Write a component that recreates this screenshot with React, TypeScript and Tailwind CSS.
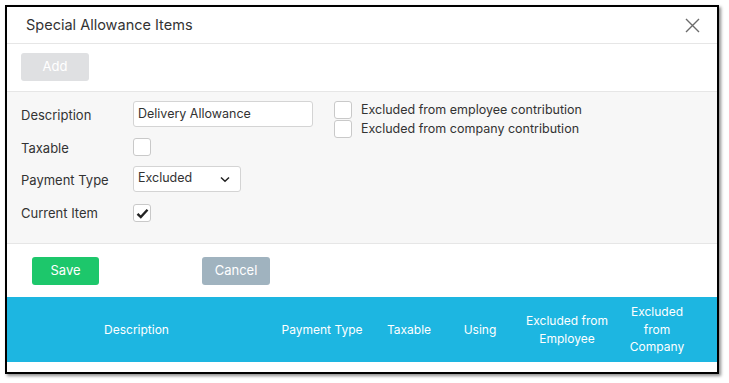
import { useState } from "react";

const columns = [
  { label: "Description", w: "w-[259px]", px: "px-[8px]" },
  { label: "Payment Type", w: "w-[112px]", px: "px-[8px]" },
  { label: "Taxable", w: "w-[62px]", px: "px-[8px]" },
  { label: "Using", w: "w-[80px]", px: "px-[8px]" },
  { label: "Excluded from Employee", w: "w-[94px]", px: "px-[3px]" },
  { label: "Excluded from Company", w: "w-[86px]", px: "px-[8px]" },
];

function Check({ checked, className = "" }: { checked?: boolean; className?: string }) {
  return (
    <div className={"w-[18px] h-[18px] bg-white border border-[#c9c9c9] rounded-[3px] flex items-center justify-center " + className}>
      {checked && (
        <svg width="13" height="11" viewBox="0 0 13 11">
          <path d="M1.5 5.8 L4.8 9 L11.5 1.8" fill="none" stroke="#222" strokeWidth="2.4" />
        </svg>
      )}
    </div>
  );
}

export default function App() {
  const [desc, setDesc] = useState("Delivery Allowance");

  return (
    <div className="w-[729px] h-[383px] bg-white pt-[5px] pl-[5px] font-['Inter',sans-serif] text-[#333]">
      <div className="w-[714px] h-[369px] border-2 border-black shadow-[2px_2px_3px_rgba(0,0,0,0.45)] bg-white flex flex-col">
        <div className="h-[37px] shrink-0 border-b border-[#e6e6e6] flex items-center justify-between pl-[19px] pr-[17px]">
          <h2 className="text-[14.5px] leading-none">Special Allowance Items</h2>
          <svg width="15" height="15" viewBox="0 0 15 15">
            <path d="M1 1 L14 14 M14 1 L1 14" stroke="#6b6b6b" strokeWidth="1.4" />
          </svg>
        </div>

        <div className="h-[48px] shrink-0 border-b border-[#e6e6e6] pl-[14px] pt-[9px]">
          <button className="w-[68px] h-[28px] rounded-[3px] bg-[#dfe0e2] text-white text-[13px]">Add</button>
        </div>

        <div className="h-[152px] shrink-0 bg-[#f7f7f7] border-b border-[#e6e6e6] pl-[14px] pt-[9px] flex text-[13px]">
          <div className="w-[306px] flex flex-col">
            <div className="h-[26px] flex items-center">
              <span className="w-[112px] pt-[4px]">Description</span>
              <input
                value={desc}
                onChange={(e) => setDesc(e.target.value)}
                className="w-[180px] h-[26px] bg-white border border-[#d4d4d4] rounded-[3px] px-[4px] pb-[1px] text-[12.5px] text-[#333] outline-none"
              />
            </div>
            <div className="h-[26px] mt-[7px] flex items-center">
              <span className="w-[112px] pt-[3px]">Taxable</span>
              <Check />
            </div>
            <div className="h-[26px] mt-[6px] flex items-center">
              <span className="w-[112px] pt-[3px]">Payment Type</span>
              <div className="w-[108px] h-[26px] bg-white border border-[#d4d4d4] rounded-[3px] pl-[4px] pr-[10px] flex items-center justify-between text-[12.5px]">
                <span className="pb-[1px]">Excluded</span>
                <svg width="10" height="7" viewBox="0 0 10 7">
                  <path d="M1 1.5 L5 5.3 L9 1.5" fill="none" stroke="#222" strokeWidth="1.5" />
                </svg>
              </div>
            </div>
            <div className="h-[26px] mt-[8px] flex items-center">
              <span className="w-[112px] pt-[2px]">Current Item</span>
              <Check checked />
            </div>
          </div>
          <div className="pl-[7px] flex flex-col gap-[2px] text-[12.5px]">
            <label className="flex items-center gap-[9px] h-[17px]">
              <Check className="h-[17px]" />
              <span className="pt-[1px]">Excluded from employee contribution</span>
            </label>
            <label className="flex items-center gap-[9px] h-[18px]">
              <Check />
              <span className="pt-[1px]">Excluded from company contribution</span>
            </label>
          </div>
        </div>

        <div className="h-[53px] shrink-0 flex items-start pt-[13px] pl-[25px] text-[13px] text-white">
          <button className="w-[67px] h-[28px] rounded-[3px] bg-[#1dc76b]">Save</button>
          <button className="ml-[103px] w-[68px] h-[28px] rounded-[3px] bg-[#a0b3bf]">Cancel</button>
        </div>

        <div className="h-[65px] shrink-0 bg-[#1db6e1] flex text-white text-[12px] leading-[17.5px]">
          {columns.map((c) => (
            <div key={c.label} className={c.w + " " + c.px + " flex items-center justify-center text-center"}>
              {c.label}
            </div>
          ))}
        </div>
      </div>
    </div>
  );
}
